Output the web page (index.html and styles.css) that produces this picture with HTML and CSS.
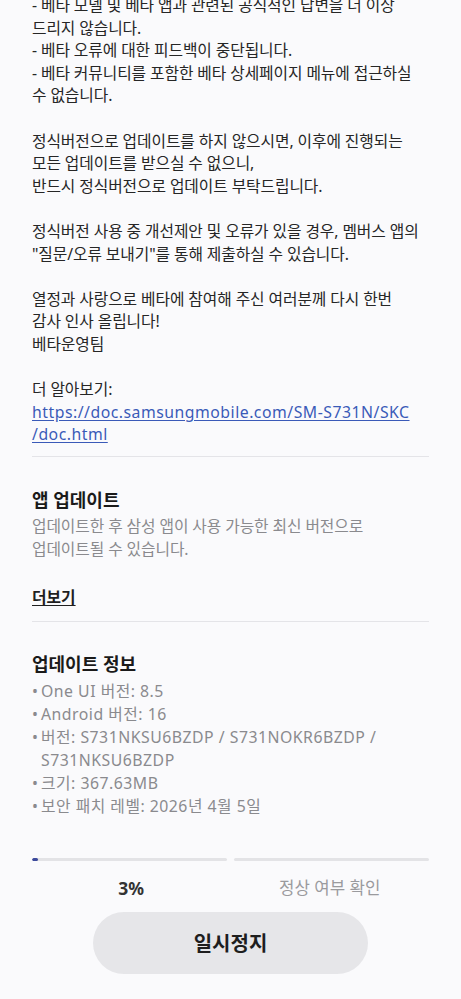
FILE: index.html
```html
<!DOCTYPE html>
<html lang="ko">
<head>
<meta charset="utf-8">
<title>소프트웨어 업데이트</title>
<link rel="stylesheet" href="styles.css">
</head>
<body>
<main class="page">
  <section class="notice">
    <p>- 베타 모델 및 베타 앱과 관련된 공식적인 답변을 더 이상<br>드리지 않습니다.<br>- 베타 오류에 대한 피드백이 중단됩니다.<br>- 베타 커뮤니티를 포함한 베타 상세페이지 메뉴에 접근하실<br>수 없습니다.</p>
    <p>정식버전으로 업데이트를 하지 않으시면, 이후에 진행되는<br>모든 업데이트를 받으실 수 없으니,<br>반드시 정식버전으로 업데이트 부탁드립니다.</p>
    <p>정식버전 사용 중 개선제안 및 오류가 있을 경우, 멤버스 앱의<br>"질문/오류 보내기"를 통해 제출하실 수 있습니다.</p>
    <p>열정과 사랑으로 베타에 참여해 주신 여러분께 다시 한번<br>감사 인사 올립니다!<br>베타운영팀</p>
    <p>더 알아보기:<br><a class="link" href="#">https://doc.samsungmobile.com/SM-S731N/SKC<br>/doc.html</a></p>
  </section>
  <hr class="divider">
  <section class="app-update">
    <h2 class="title">앱 업데이트</h2>
    <p class="desc">업데이트한 후 삼성 앱이 사용 가능한 최신 버전으로<br>업데이트될 수 있습니다.</p>
    <a class="more" href="#">더보기</a>
  </section>
  <hr class="divider">
  <section class="info">
    <h2 class="title">업데이트 정보</h2>
    <ul class="bullets">
      <li>One UI 버전: 8.5</li>
      <li>Android 버전: 16</li>
      <li>버전: S731NKSU6BZDP / S731NOKR6BZDP / S731NKSU6BZDP</li>
      <li>크기: 367.63MB</li>
      <li>보안 패치 레벨: 2026년 4월 5일</li>
    </ul>
  </section>
  <section class="progress">
    <div class="bars">
      <div class="bar"><div class="fill" style="width:3%"></div></div>
      <div class="bar"></div>
    </div>
    <div class="labels">
      <span class="pct">3%</span>
      <span class="check">정상 여부 확인</span>
    </div>
  </section>
  <div class="actions">
    <button class="pause" type="button">일시정지</button>
  </div>
</main>
</body>
</html>
```

FILE: styles.css
```css
html, body {
  margin: 0;
  padding: 0;
  background: #fafafc;
}
body {
  font-family: "Noto Sans", "Noto Sans CJK KR", sans-serif;
  color: #262626;
  -webkit-font-smoothing: antialiased;
}
.page {
  padding: 0 32px;
  margin-top: -6px;
  overflow: hidden;
}
.notice {
  font-size: 15.8px;
  line-height: 22.6px;
  letter-spacing: -0.1px;
}
.notice p {
  margin: 0 0 22.6px;
}
.notice p:last-child {
  margin-bottom: 0;
}
.link {
  color: #3a5ab8;
  letter-spacing: 0.5px;
  text-decoration: underline;
  text-underline-offset: 2px;
}
.divider {
  border: 0;
  height: 1px;
  background: #e4e4e8;
  margin: 10px 0 0;
}
.app-update, .info {
  display: flex;
  flex-direction: column;
  align-items: flex-start;
}
.title {
  margin: 31px 0 3px;
  font-size: 18px;
  line-height: 24px;
  font-weight: 700;
  color: #1a1a1a;
}
.desc {
  margin: 0;
  font-size: 15.8px;
  line-height: 23px;
  color: #8a8a8e;
  letter-spacing: -0.1px;
}
.more {
  margin-top: 25px;
  font-size: 15.8px;
  line-height: 23px;
  font-weight: 700;
  color: #1f1f1f;
  text-decoration: underline;
  text-underline-offset: 2px;
}
.app-update + .divider {
  margin-top: 12px;
}
.info .title {
  margin-top: 30px;
  margin-bottom: 4px;
}
.bullets {
  list-style: none;
  margin: 0;
  padding: 0;
  font-size: 15.8px;
  line-height: 23px;
  color: #8a8a8e;
  letter-spacing: 0.5px;
}
.bullets li {
  display: flex;
}
.bullets li::before {
  content: "•";
  flex: none;
  width: 9px;
}
.progress {
  margin-top: 40px;
}
.bars {
  display: flex;
  gap: 7px;
}
.bar {
  flex: 1;
  height: 3px;
  border-radius: 2px;
  background: #e3e3e6;
  overflow: hidden;
}
.fill {
  height: 100%;
  background: #3d4a9c;
  border-radius: 2px;
  min-width: 4px;
}
.labels {
  display: flex;
  margin-top: 16px;
  font-size: 16.8px;
  line-height: 22px;
}
.labels span {
  flex: 1;
  text-align: center;
}
.pct {
  font-size: 17.5px;
  font-weight: 700;
  color: #333;
}
.check {
  color: #9a9a9e;
}
.actions {
  display: flex;
  justify-content: center;
  margin-top: 13px;
  padding-bottom: 30px;
}
.pause {
  width: 275px;
  height: 62px;
  border: 0;
  border-radius: 31px;
  background: #e6e6e9;
  font-family: inherit;
  font-size: 20px;
  font-weight: 700;
  color: #1e1e1e;
}
```
